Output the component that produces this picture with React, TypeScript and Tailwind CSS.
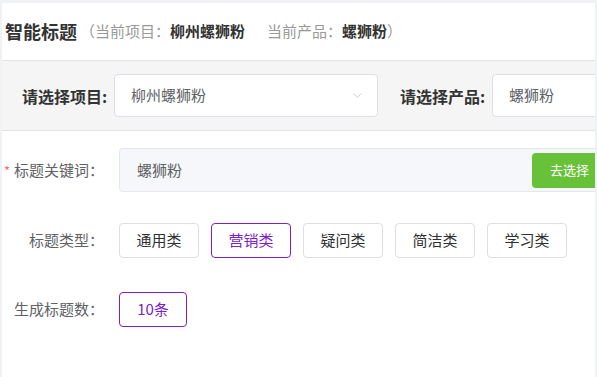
import { ChevronDown } from "lucide-react";

const types = ["通用类", "营销类", "疑问类", "简洁类", "学习类"];

export default function App() {
  const font = { fontFamily: '"Noto Sans CJK SC", "Noto Sans", sans-serif' };
  return (
    <div
      className="w-[597px] h-[377px] bg-[#f0f2f5] pt-[3px] px-[2px] overflow-hidden"
      style={font}
    >
      <div className="bg-white h-full overflow-hidden">
        {/* 标题栏 */}
        <div className="h-[58px] flex items-center pl-[3px] border-b border-[#e2e2e2] whitespace-nowrap">
          <span className="text-[18px] font-bold text-[#333]">智能标题</span>
          <span className="ml-[3px] text-[15px] text-[#999]">（当前项目：</span>
          <span className="text-[15px] font-bold text-[#333]">柳州螺狮粉</span>
          <span className="ml-[22px] text-[15px] text-[#999]">当前产品：</span>
          <span className="text-[15px] font-bold text-[#333]">螺狮粉</span>
          <span className="text-[15px] text-[#999]">）</span>
        </div>

        {/* 选择栏 */}
        <div className="h-[70px] bg-[#f5f5f5] border-b border-[#e4e4e4] flex items-center pl-[20px] whitespace-nowrap">
          <span className="text-[16px] font-bold text-[#333] w-[92px] shrink-0">请选择项目:</span>
          <div className="w-[264px] h-[43px] shrink-0 bg-white border border-[#dcdfe6] rounded-[4px] flex items-center justify-between pl-[16px] pr-[12px]">
            <span className="text-[15px] text-[#606266]">柳州螺狮粉</span>
            <ChevronDown size={15} strokeWidth={1.3} className="text-[#c0c4cc]" />
          </div>
          <span className="ml-[22px] text-[16px] font-bold text-[#333] w-[92px] shrink-0">请选择产品:</span>
          <div className="w-[200px] h-[43px] shrink-0 bg-white border border-[#dcdfe6] rounded-[4px] flex items-center pl-[16px]">
            <span className="text-[15px] text-[#606266]">螺狮粉</span>
          </div>
        </div>

        {/* 表单 */}
        <div className="pt-[17px] flex flex-col whitespace-nowrap">
          <div className="flex items-center">
            <label className="w-[102px] shrink-0 text-right text-[15px] text-[#606266]">
              <span className="text-[#f56c6c] mr-[4px] text-[13px]">*</span>标题关键词：
            </label>
            <div className="ml-[15px] w-[498px] shrink-0 h-[44px] bg-[#f5f7fa] border border-[#e4e7ed] rounded-[4px] flex items-center justify-between pl-[17px] pr-[4px]">
              <span className="text-[15px] text-[#606266]">螺狮粉</span>
              <button className="h-[35px] w-[80px] bg-[#67c23a] rounded-[4px] text-white text-[13px] text-left pl-[18px]">
                去选择
              </button>
            </div>
          </div>

          <div className="flex items-center mt-[31px]">
            <label className="w-[102px] shrink-0 text-right text-[15px] text-[#606266]">标题类型：</label>
            <div className="ml-[15px] flex gap-[12px]">
              {types.map((t) => (
                <button
                  key={t}
                  className={
                    t === "营销类"
                      ? "w-[80px] h-[35px] rounded-[4px] border border-[#7b22c9] text-[#7b22c9] text-[15px] bg-white"
                      : "w-[80px] h-[35px] rounded-[4px] border border-[#dcdfe6] text-[#303133] text-[15px] bg-white"
                  }
                >
                  {t}
                </button>
              ))}
            </div>
          </div>

          <div className="flex items-center mt-[34px]">
            <label className="w-[102px] shrink-0 text-right text-[15px] text-[#606266]">生成标题数：</label>
            <button className="ml-[15px] w-[68px] h-[35px] rounded-[4px] border border-[#7b22c9] text-[#7b22c9] text-[15px] bg-white">
              10条
            </button>
          </div>
        </div>
      </div>
    </div>
  );
}
